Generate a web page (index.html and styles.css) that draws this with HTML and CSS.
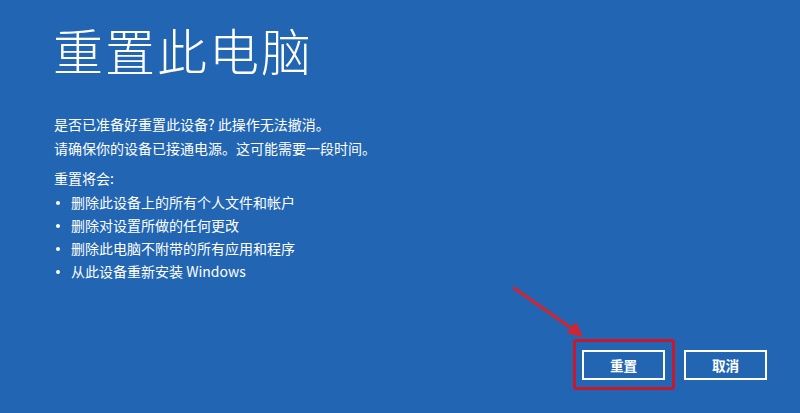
FILE: index.html
```html
<!DOCTYPE html>
<html lang="zh-CN">
<head>
<meta charset="utf-8">
<title>重置此电脑</title>
<link rel="stylesheet" href="styles.css">
</head>
<body>
<div class="screen">
  <main class="content">
    <h1 class="title">重置此电脑</h1>
    <p class="para">是否已准备好重置此设备? 此操作无法撤消。<br>请确保你的设备已接通电源。这可能需要一段时间。</p>
    <p class="list-head">重置将会:</p>
    <ul class="list">
      <li>删除此设备上的所有个人文件和帐户</li>
      <li>删除对设置所做的任何更改</li>
      <li>删除此电脑不附带的所有应用和程序</li>
      <li>从此设备重新安装 Windows</li>
    </ul>
  </main>
  <div class="actions">
    <div class="btn-wrap">
      <button class="btn">重置</button>
      <span class="highlight"></span>
      <svg class="arrow" width="80" height="60" viewBox="0 0 80 60">
        <line x1="2" y1="2" x2="62" y2="44" stroke="#d2232f" stroke-width="3" stroke-linecap="round"/>
        <polygon points="71,51 55,47 64,36" fill="#d2232f"/>
      </svg>
    </div>
    <button class="btn">取消</button>
  </div>
</div>
</body>
</html>
```
FILE: styles.css
```css
html, body {
  margin: 0;
  padding: 0;
}
body {
  background: #2266b3;
  color: #ffffff;
  font-family: "Noto Sans CJK SC", "Noto Sans", sans-serif;
}
.screen {
  width: 800px;
  height: 413px;
  display: flex;
  flex-direction: column;
  box-sizing: border-box;
  padding: 0 33px 0 54px;
  overflow: hidden;
}
.content {
  flex: 1;
}
.title {
  margin: 17px 0 0 -1px;
  font-size: 50px;
  font-weight: 300;
  line-height: 64px;
  letter-spacing: 2px;
}
.para {
  margin: 32px 0 0;
  font-size: 14px;
  line-height: 23.5px;
}
.list-head {
  margin: 7px 0 0;
  font-size: 14px;
  line-height: 23.5px;
}
.list {
  margin: 0;
  padding: 0;
  list-style: none;
  font-size: 14px;
  line-height: 23.3px;
}
.list li {
  position: relative;
  padding-left: 17px;
}
.list li::before {
  content: "";
  position: absolute;
  left: 2px;
  top: 10px;
  width: 4px;
  height: 4px;
  border-radius: 50%;
  background: #ffffff;
}
.actions {
  display: flex;
  justify-content: flex-end;
  gap: 19px;
  padding-bottom: 33px;
}
.btn-wrap {
  position: relative;
}
.btn {
  width: 83px;
  height: 30px;
  box-sizing: border-box;
  border: 2px solid #ffffff;
  background: transparent;
  color: #ffffff;
  font-family: "Noto Sans CJK SC", "Noto Sans", sans-serif;
  font-size: 13.6px;
  font-weight: 700;
  padding: 0;
  display: block;
}
.highlight {
  position: absolute;
  left: -9px;
  top: -11px;
  width: 102px;
  height: 51px;
  box-sizing: border-box;
  border: 3px solid #c8182c;
  border-radius: 3px;
}
.arrow {
  position: absolute;
  left: -70px;
  top: -64px;
}
```
